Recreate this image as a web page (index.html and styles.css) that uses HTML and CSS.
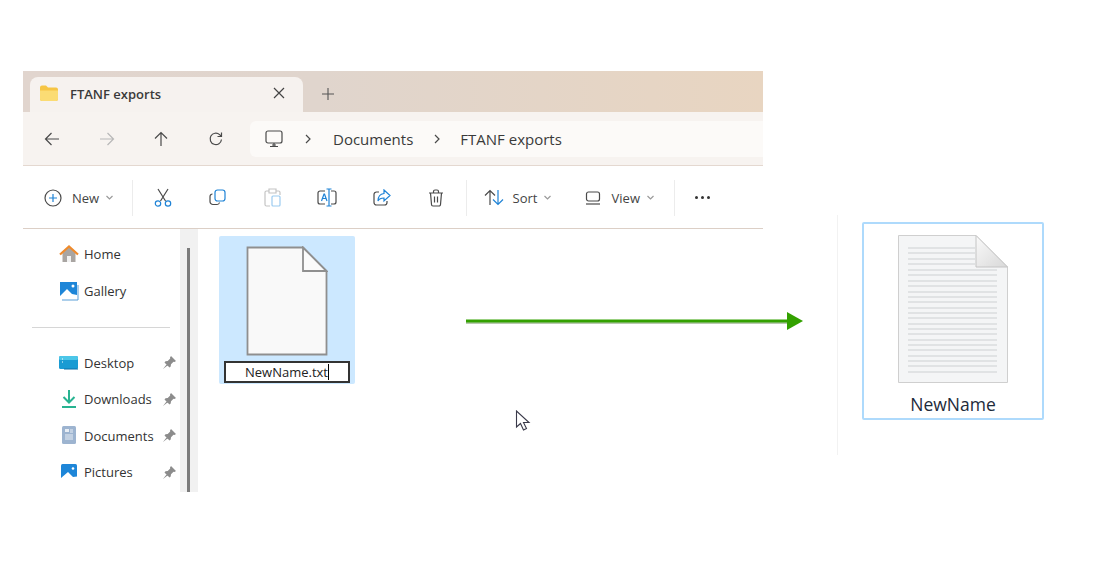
FILE: index.html
```html
<!DOCTYPE html>
<html lang="en">
<head>
    <meta charset="UTF-8">
    <title>FTANF exports</title>
    <link rel="stylesheet" href="styles.css">
</head>
<body>
    <div class="stage">
        <div class="explorer">
            <div class="tabbar">
                <div class="tab">
                    <svg class="tab-folder" width="20" height="18" viewBox="0 0 20 18"><path d="M1 3.5a2 2 0 0 1 2-2h4l2 2h8a2 2 0 0 1 2 2V15a2 2 0 0 1-2 2H3a2 2 0 0 1-2-2z" fill="#f6c544"/><path d="M1 6.5h18V15a2 2 0 0 1-2 2H3a2 2 0 0 1-2-2z" fill="#fbdc74"/></svg>
                    <span class="tab-title">FTANF exports</span>
                    <svg class="tab-close" width="12" height="12" viewBox="0 0 12 12"><path d="M1 1l10 10M11 1L1 11" stroke="#444" stroke-width="1.2"/></svg>
                </div>
                <svg class="tab-new" width="12" height="12" viewBox="0 0 12 12"><path d="M6 0v12M0 6h12" stroke="#555" stroke-width="1.1"/></svg>
            </div>

            <div class="navbar">
                <div class="nav-btn"><svg width="16" height="16" viewBox="0 0 16 16"><path d="M15 8H1.5M7.5 2L1.5 8l6 6" class="line dark"/></svg></div>
                <div class="nav-btn"><svg width="16" height="16" viewBox="0 0 16 16"><path d="M1 8h13.5M8.5 2l6 6-6 6" class="line faint"/></svg></div>
                <div class="nav-btn"><svg width="16" height="16" viewBox="0 0 16 16"><path d="M8 15V1.5M2 7.5l6-6 6 6" class="line dark"/></svg></div>
                <div class="nav-btn"><svg width="16" height="16" viewBox="0 0 16 16"><path d="M13.5 8.5A5.7 5.7 0 1 1 11.6 3.6L13.5 5.5M13.5 1.5v4h-4" class="line dark"/></svg></div>
                <div class="address">
                    <svg class="addr-pc" width="18" height="18" viewBox="0 0 18 18"><rect x="1" y="1" width="16" height="12" rx="2" class="line dark"/><path d="M9 13v3M5 16.5h8M7 15h4" class="line dark"/></svg>
                    <svg class="addr-chev first" width="6" height="10" viewBox="0 0 6 10"><path d="M1 1l4 4-4 4" class="line dark"/></svg>
                    <span class="crumb">Documents</span>
                    <svg class="addr-chev" width="6" height="10" viewBox="0 0 6 10"><path d="M1 1l4 4-4 4" class="line dark"/></svg>
                    <span class="crumb">FTANF exports</span>
                </div>
            </div>

            <div class="toolbar">
                <div class="tool-text tool-new">
                    <svg width="18" height="18" viewBox="0 0 18 18"><circle cx="9" cy="9" r="8" class="line dark"/><path d="M9 5v8M5 9h8" class="line blue"/></svg>
                    <span>New</span>
                    <svg class="chev" width="7" height="5" viewBox="0 0 7 5"><path d="M.5 1L3.5 4l3-3" class="line grey"/></svg>
                </div>
                <div class="tool-sep sep-icons"></div>
                <div class="tool-btn"><svg width="18" height="19" viewBox="0 0 18 19"><path d="M4 1l7.5 12M14 1L6.5 13" class="line dark"/><circle cx="4" cy="15.5" r="2.7" class="line blue"/><circle cx="14" cy="15.5" r="2.7" class="line blue"/></svg></div>
                <div class="tool-btn"><svg width="17" height="17" viewBox="0 0 17 17"><rect x="6" y="1" width="10" height="11" rx="2.5" class="line blue"/><path d="M3.5 5A2.5 2.5 0 0 0 1 7.5v5A3 3 0 0 0 4 15.500h4a2.500 2.500 0 0 0 2.500-2" class="line dark"/></svg></div>
                <div class="tool-btn"><svg width="17" height="19" viewBox="0 0 17 19"><path d="M5 3H2.500A1.500 1.500 0 0 0 1 4.500v12A1.500 1.500 0 0 0 2.500 18H6M12 3h2.500A1.500 1.500 0 0 1 16 4.500V7M5 1h7v4H5z" class="line pale"/><rect x="8" y="8" width="8" height="10" rx="1" class="line paleblue"/></svg></div>
                <div class="tool-btn"><svg width="20" height="19" viewBox="0 0 20 19"><path d="M8 3H3a2 2 0 0 0-2 2v9a2 2 0 0 0 2 2h5M14 3h3a2 2 0 0 1 2 2v9a2 2 0 0 1-2 2h-3" class="line dark"/><path d="M4.500 13L7 6h.5L10 13M5.500 10.500h3.500" class="line blue"/><path d="M12 1v17M9.500 1h5M9.500 18h5" class="line blue"/></svg></div>
                <div class="tool-btn"><svg width="18" height="17" viewBox="0 0 18 17"><path d="M6 3H3.500A2.500 2.500 0 0 0 1 5.500v8A2.500 2.500 0 0 0 3.500 16h8a2.500 2.500 0 0 0 2.500-2.500V12" class="line dark"/><path d="M11 1l6 5.500L11 12V9C8 9 6 10 5 12c0-4 2-7 6-7.500z" class="line blue"/></svg></div>
                <div class="tool-btn"><svg width="16" height="18" viewBox="0 0 16 18"><path d="M1 4h14M5.500 4V2.500A1.500 1.500 0 0 1 7 1h2a1.500 1.500 0 0 1 1.500 1.500V4M2.500 4l1 11.500A1.500 1.500 0 0 0 5 17h6a1.500 1.500 0 0 0 1.500-1.500l1-11.500M6.500 7.500v6M9.500 7.500v6" class="line dark"/></svg></div>
                <div class="tool-sep sep-sort"></div>
                <div class="tool-text tool-sort">
                    <svg width="20" height="17" viewBox="0 0 20 17"><path d="M6 16V1.500M1 6.500l5-5 5 5" class="line dark"/><path d="M14 1v14.500M9 10.500l5 5 5-5" class="line blue"/></svg>
                    <span>Sort</span>
                    <svg class="chev" width="7" height="5" viewBox="0 0 7 5"><path d="M.5 1L3.500 4l3-3" class="line grey"/></svg>
                </div>
                <div class="tool-text tool-view">
                    <svg width="16" height="14" viewBox="0 0 16 14"><rect x="1.500" y="1" width="13" height="9" rx="2" class="line dark"/><path d="M1 13h14" class="line dark"/></svg>
                    <span>View</span>
                    <svg class="chev" width="7" height="5" viewBox="0 0 7 5"><path d="M.5 1L3.500 4l3-3" class="line grey"/></svg>
                </div>
                <div class="tool-sep"></div>
                <div class="tool-more"><i></i><i></i><i></i></div>
            </div>

            <div class="body">
                <div class="sidebar">
                    <div class="side-item">
                        <svg width="20" height="18" viewBox="0 0 20 18"><path d="M3.500 8v9h13V8L10 2z" fill="#a9a5a2"/><rect x="8" y="11" width="4" height="6" fill="#f2f2f2"/><path d="M1 9.500L10 1.500l9 8" fill="none" stroke="#ee8a2c" stroke-width="2.200"/></svg>
                        <span>Home</span>
                    </div>
                    <div class="side-item">
                        <svg width="20" height="20" viewBox="0 0 20 20"><rect x="1" y="1" width="17" height="16" fill="#1e86d8"/><path d="M1 15l7-7 5 5 5 1v3H1z" fill="#fff"/><circle cx="14" cy="5" r="1.500" fill="#fff"/><path d="M19 4v15H3" fill="none" stroke="#5b9fd8"/></svg>
                        <span>Gallery</span>
                    </div>
                    <div class="side-rule"></div>
                    <div class="side-item">
                        <svg width="20" height="16" viewBox="0 0 20 16"><rect x="0" y="1" width="19" height="13" rx="1.500" fill="#1a9bd3"/><rect x="0" y="1" width="19" height="4" rx="1.500" fill="#4cc6e8"/><path d="M3 4h1M3 7h1" stroke="#fff"/><path d="M5 14h14" stroke="#0d6ea8"/></svg>
                        <span>Desktop</span>
                        <svg class="pin" width="13" height="13" viewBox="0 0 13 13"><path d="M8 0l5 5-1.500 1-1-.2L8 8.300l-.3 2.200-1.200 1L1.500 6.500l1-1.200L4.700 5 7.200 2.500 7 1.500zM3.500 8.500L0 13l4.500-3.500z" fill="#8c8c8c"/></svg>
                    </div>
                    <div class="side-item">
                        <svg width="20" height="19" viewBox="0 0 20 19"><path d="M10 0v12M4.500 7L10 12.500 15.500 7" fill="none" stroke="#28b391" stroke-width="2"/><path d="M3 17h14" stroke="#28b391" stroke-width="2"/></svg>
                        <span>Downloads</span>
                        <svg class="pin" width="13" height="13" viewBox="0 0 13 13"><path d="M8 0l5 5-1.500 1-1-.2L8 8.300l-.3 2.200-1.200 1L1.500 6.500l1-1.200L4.700 5 7.200 2.500 7 1.500zM3.500 8.500L0 13l4.500-3.500z" fill="#8c8c8c"/></svg>
                    </div>
                    <div class="side-item">
                        <svg width="20" height="19" viewBox="0 0 20 19"><rect x="3" y="0" width="14" height="18" rx="1.500" fill="#9db4d0"/><rect x="6" y="3" width="4" height="3" fill="#e8eef5"/><path d="M11 4h3M11 6h3M6 9h8M6 11h8M6 13h8" stroke="#e8eef5"/></svg>
                        <span>Documents</span>
                        <svg class="pin" width="13" height="13" viewBox="0 0 13 13"><path d="M8 0l5 5-1.500 1-1-.2L8 8.300l-.3 2.200-1.200 1L1.500 6.500l1-1.200L4.700 5 7.200 2.500 7 1.500zM3.500 8.500L0 13l4.500-3.500z" fill="#8c8c8c"/></svg>
                    </div>
                    <div class="side-item">
                        <svg width="20" height="17" viewBox="0 0 20 17"><rect x="2" y="0" width="16" height="16" rx="1.500" fill="#1e86d8"/><path d="M2 14l7-6 5 5 4-.500V16H2z" fill="#fff"/><circle cx="14" cy="4.500" r="1.300" fill="#fff"/></svg>
                        <span>Pictures</span>
                        <svg class="pin" width="13" height="13" viewBox="0 0 13 13"><path d="M8 0l5 5-1.500 1-1-.2L8 8.300l-.3 2.200-1.200 1L1.500 6.500l1-1.200L4.700 5 7.200 2.500 7 1.500zM3.500 8.500L0 13l4.500-3.500z" fill="#8c8c8c"/></svg>
                    </div>
                </div>
                <div class="side-scroll"><div class="side-thumb"></div></div>
                <div class="files">
                    <div class="file-tile">
                        <svg class="blank-doc" width="82" height="110" viewBox="0 0 82 110"><path d="M1.500 1.500H57L80.500 25V108.500H1.500z" fill="#f9f9f9" stroke="#8f8f8f" stroke-width="1.800"/><path d="M57 1.500V25H80.500z" fill="#fbfbfb" stroke="#8f8f8f" stroke-width="1.800"/></svg>
                        <div class="rename-box"><span>NewName.txt</span><i class="caret"></i></div>
                    </div>
                </div>
            </div>
        </div>

        <div class="result">
            <div class="result-card">
                <svg class="lined-doc" width="110" height="148" viewBox="0 0 110 148">
                    <defs>
                        <linearGradient id="fold" x1="0" y1="0" x2="1" y2="1"><stop offset="0" stop-color="#fafafa"/><stop offset="1" stop-color="#d8d8d8"/></linearGradient>
                    </defs>
                    <path d="M.5.500H78L109.500 32V147.500H.5z" fill="#f4f5f6" stroke="#cfcfcf"/>
                    <path class="doc-lines" d="M10 13h67M10 18h67M10 24h67M10 29h67M10 35h89M10 40h89M10 46h89M10 51h89M10 57h89M10 62h89M10 67h89M10 73h89M10 78h89M10 83h89M10 89h89M10 94h89M10 99h89M10 105h89M10 110h89M10 115h89M10 121h89M10 126h89M10 131h89M10 137h89"/>
                    <path d="M78 .5V32H109.500z" fill="url(#fold)" stroke="#c4c4c4"/>
                </svg>
                <span class="result-name">NewName</span>
            </div>
        </div>

        <svg class="arrow" width="340" height="20" viewBox="0 0 340 20"><path d="M1 10.500H324" stroke="#b9c9b0" stroke-width="3" transform="translate(0 1)"/><path d="M1 10H324" stroke="#33a100" stroke-width="3"/><path d="M322 1l16 9-16 9z" fill="#33a100"/></svg>
        <svg class="cursor" width="16" height="23" viewBox="0 0 16 23"><path d="M1.500 1v16l4-3.500 3 6.500 3-1.500-3-6h5.500z" fill="#fff" stroke="#3a3a4a" stroke-width="1.100"/></svg>
    </div>
</body>
</html>
```
FILE: styles.css
```css
html, body {
    margin: 0;
    background-color: #ffffff;
}
body {
    font-family: "Open Sans", "Noto Sans", Arial, sans-serif;
    color: #2b2b2b;
}
svg {
    display: block;
    flex: none;
}
.line {
    fill: none;
    stroke-width: 1.2;
}
.dark { stroke: #4a4a4a; }
.faint { stroke: #b8b8b8; }
.grey { stroke: #9a9a9a; }
.blue { stroke: #1f83d6; }
.pale { stroke: #c4c4c4; }
.paleblue { stroke: #9ccbf0; }

.stage {
    position: relative;
    width: 1113px;
    height: 564px;
    overflow: hidden;
    display: flex;
    align-items: flex-start;
}

/* Ventana del explorador */
.explorer {
    width: 740px;
    height: 421px;
    margin: 71px 0 0 23px;
    display: flex;
    flex-direction: column;
}
.tabbar {
    height: 41px;
    flex: none;
    display: flex;
    align-items: flex-end;
    padding-left: 7px;
    box-sizing: border-box;
    background: linear-gradient(90deg, #e1d5ce 0%, #e0d5cd 40%, #e8d5c1 100%);
}
.tab {
    width: 273px;
    height: 35px;
    display: flex;
    align-items: center;
    padding: 0 18px 2px 9px;
    box-sizing: border-box;
    background-color: #f6f2ef;
    border-radius: 8px 8px 0 0;
}
.tab-folder, .tab-close {
    margin-bottom: 2px;
}
.tab-title {
    margin-left: 11px;
    flex: 1;
    font-size: 13px;
    font-weight: 600;
    color: #3a3a3a;
}
.tab-new {
    margin: 0 0 12px 19px;
}
.navbar {
    height: 54px;
    flex: none;
    display: flex;
    align-items: center;
    box-sizing: border-box;
    padding-left: 2px;
    background-color: #f7f3f0;
    border-bottom: 1px solid #e4d8d0;
}
.nav-btn {
    width: 54.500px;
    display: flex;
    justify-content: center;
}
.address {
    flex: 1;
    height: 36px;
    margin-left: 7px;
    display: flex;
    align-items: center;
    padding-left: 15px;
    background-color: #fcfaf8;
    border-radius: 6px 0 0 6px;
    font-size: 15px;
    color: #3a3a3a;
}
.addr-chev {
    margin: 0 20px 0 21px;
}
.addr-chev.first {
    margin: 0 22px 0 22px;
}
.toolbar {
    height: 63px;
    flex: none;
    display: flex;
    align-items: center;
    box-sizing: border-box;
    padding-top: 1px;
    background-color: #ffffff;
    border-bottom: 1px solid #dccfc6;
    font-size: 13px;
    color: #444;
}
.tool-text {
    display: flex;
    align-items: center;
}
.tool-text span {
    margin-left: 10px;
}
.chev {
    margin-left: 7px;
}
.tool-new {
    width: 109px;
    padding-left: 21px;
    box-sizing: border-box;
}
.tool-sep {
    width: 1px;
    height: 36px;
    background-color: #ececec;
}
.sep-icons {
    margin-right: 3px;
}
.sep-sort {
    margin-left: 2px;
}
.tool-btn {
    width: 54.600px;
    display: flex;
    justify-content: center;
}
.tool-sort {
    width: 101px;
    padding-left: 17px;
    box-sizing: border-box;
}
.tool-sort span {
    margin-left: 9px;
}
.tool-view {
    width: 106px;
    padding-left: 17px;
    box-sizing: border-box;
}
.tool-view span {
    margin-left: 11px;
}
.tool-more {
    display: flex;
    gap: 3px;
    padding-left: 20px;
}
.tool-more i {
    width: 3px;
    height: 3px;
    border-radius: 50%;
    background-color: #333;
}
.body {
    flex: 1;
    display: flex;
    min-height: 0;
}
.sidebar {
    width: 157px;
    flex: none;
    box-sizing: border-box;
    padding: 7px 0 0 36px;
    font-size: 13px;
    color: #333;
}
.side-item {
    height: 36.400px;
    display: flex;
    align-items: center;
}
.side-item span {
    margin-left: 5px;
    flex: 1;
}
.pin {
    margin-right: 4px;
}
.side-rule {
    height: 1px;
    margin: 18px 10px 17px -27px;
    background-color: #d6d6d6;
}
.side-scroll {
    width: 18px;
    flex: none;
    background-color: #f1f1f1;
    padding: 19px 0 0 7px;
    box-sizing: border-box;
}
.side-thumb {
    width: 3px;
    height: 100%;
    background-color: #7c7c7c;
}
.files {
    flex: 1;
    padding: 7px 0 0 21px;
    background-color: #ffffff;
}
.file-tile {
    width: 136px;
    height: 148px;
    box-sizing: border-box;
    padding: 10px 5px 0;
    background-color: #cce8ff;
    border-radius: 2px;
    display: flex;
    flex-direction: column;
    align-items: center;
}
.blank-doc {
    margin-bottom: 5px;
}
.rename-box {
    width: 126px;
    height: 22px;
    box-sizing: border-box;
    border: 2px solid #333;
    background-color: #ffffff;
    display: flex;
    align-items: center;
    justify-content: center;
    font-size: 13px;
    color: #222;
}
.caret {
    width: 1px;
    height: 16px;
    background-color: #000;
}

/* Resultado a la derecha */
.result {
    width: 270px;
    height: 240px;
    margin: 215px 0 0 74px;
    box-sizing: border-box;
    border-left: 1px solid #f2f2f2;
    padding: 7px 0 0 24px;
}
.result-card {
    width: 182px;
    height: 198px;
    box-sizing: border-box;
    border: 2px solid #aedafc;
    border-radius: 2px;
    padding-top: 11px;
    display: flex;
    flex-direction: column;
    align-items: center;
}
.doc-lines {
    stroke: #cdd0d2;
    stroke-width: 1;
    fill: none;
}
.result-name {
    margin-top: 9px;
    font-size: 17.500px;
    color: #1d2a3a;
}

/* Flecha y puntero encima de todo */
.arrow {
    position: absolute;
    left: 465px;
    top: 311px;
}
.cursor {
    position: absolute;
    left: 515px;
    top: 410px;
}
```
